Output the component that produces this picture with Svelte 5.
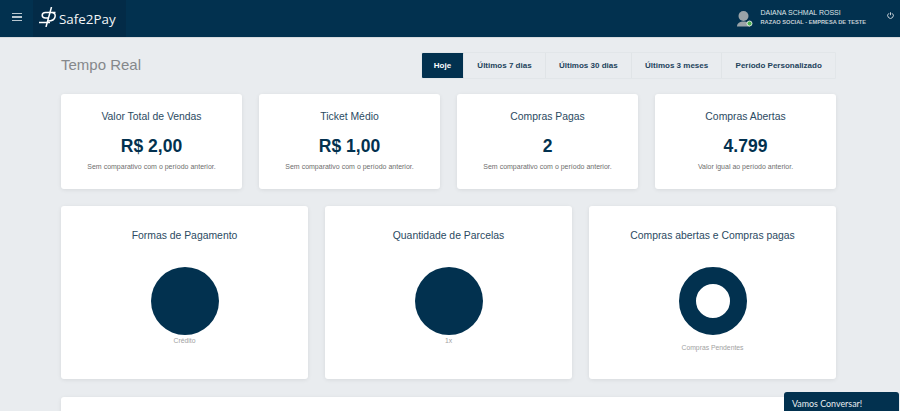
<script>
    const periods = ["Hoje", "Últimos 7 dias", "Últimos 30 dias", "Últimos 3 meses", "Período Personalizado"];

    const stats = [
        {title: "Valor Total de Vendas", value: "R$ 2,00", note: "Sem comparativo com o período anterior."},
        {title: "Ticket Médio", value: "R$ 1,00", note: "Sem comparativo com o período anterior."},
        {title: "Compras Pagas", value: "2", note: "Sem comparativo com o período anterior."},
        {title: "Compras Abertas", value: "4.799", note: "Valor igual ao período anterior."}
    ];

    const charts = [
        {title: "Formas de Pagamento", label: "Crédito", hole: false},
        {title: "Quantidade de Parcelas", label: "1x", hole: false},
        {title: "Compras abertas e Compras pagas", label: "Compras Pendentes", hole: true}
    ];
</script>

<header class="topbar">
    <button class="menu" aria-label="Menu">
        <span></span><span></span><span></span>
    </button>
    <div class="logo">
        <svg width="17" height="20" viewBox="0 0 17 20" fill="none" stroke="#fff" stroke-width="1.500">
            <path d="M0 15.500H11" />
            <path d="M16.500 5.500H6.500C4 5.500 3.200 7.200 3.200 8.300C3.200 10 4.500 11 6.500 11H10" />
            <path d="M13.500 5.500C15.800 6 16.500 8 16 10C15.500 12.500 13 14 9 14" />
            <path d="M12.500 0L7 20" />
        </svg>
        <span>Safe2Pay</span>
    </div>
    <div class="user">
        <svg class="avatar" width="16" height="16" viewBox="0 0 16 16">
            <circle cx="6.500" cy="5" r="5" fill="#9aa3a8" />
            <path d="M0 15.500C0 12 3 10.500 6.500 10.500C10 10.500 13 12 13 15.500Z" fill="#9aa3a8" />
            <circle cx="12.500" cy="12.500" r="2.500" fill="#4caf50" stroke="#fff" stroke-width=".8" />
        </svg>
        <div class="user-text">
            <div class="user-name">DAIANA SCHMAL ROSSI</div>
            <div class="user-company">RAZAO SOCIAL - EMPRESA DE TESTE</div>
        </div>
    </div>
    <svg class="power" width="7" height="7" viewBox="0 0 12 12" fill="none" stroke="#e4e8eb" stroke-width="1.500">
        <path d="M6 0.500V5.500" />
        <path d="M3.300 2.200A4.800 4.800 0 1 0 8.700 2.200" />
    </svg>
</header>

<main class="content">
    <div class="heading">
        <h1>Tempo Real</h1>
        <div class="periods">
            {#each periods as period, i}
                <button class="period" class:active={i === 0}>{period}</button>
            {/each}
        </div>
    </div>

    <section class="stats">
        {#each stats as stat}
            <div class="card stat">
                <h2>{stat.title}</h2>
                <div class="value">{stat.value}</div>
                <p>{stat.note}</p>
            </div>
        {/each}
    </section>

    <section class="charts">
        {#each charts as chart}
            <div class="card chart">
                <h2>{chart.title}</h2>
                <div class="pie" class:donut={chart.hole}></div>
                <div class="pie-label" class:low={chart.hole}>{chart.label}</div>
            </div>
        {/each}
    </section>

    <div class="card bottom"></div>
</main>

<div class="chat">Vamos Conversar!</div>

<style>
    :global(html), :global(body) {
        height: 100%;
        overflow: hidden;
    }
    :global(body) {
        background-color: #e9ecef;
        font-family: "Liberation Sans", Arial, sans-serif;
    }

    .topbar {
        height: 37px;
        background-color: #02314f;
        border-bottom: 1px solid #d6dade;
        display: flex;
        align-items: center;
        position: relative;
    }
    .menu {
        width: 33px;
        height: 37px;
        padding: 0 0 3px 12px;
        border: 0;
        background: none;
        display: flex;
        flex-direction: column;
        justify-content: center;
        gap: 2px;
    }
    .menu span {
        display: block;
        width: 10px;
        height: 1.500px;
        background-color: #b9c7d0;
    }
    .logo {
        width: 93px;
        height: 37px;
        background-color: #032b47;
        display: flex;
        align-items: center;
        color: #f4f6f7;
        font-family: "Open Sans", sans-serif;
        font-size: 13.400px;
        gap: 3px;
        padding-left: 6px;
        box-sizing: border-box;
    }
    .logo svg {
        margin-top: -3px;
    }
    .user {
        margin-left: auto;
        display: flex;
        align-items: center;
        gap: 7px;
        margin-right: 21px;
    }
    .avatar {
        margin-top: 1px;
    }
    .user-text {
        display: flex;
        flex-direction: column;
        gap: 3px;
        margin-top: -3px;
    }
    .user-name {
        font-size: 7px;
        color: #dfe4e8;
    }
    .user-company {
        font-size: 5.700px;
        font-weight: 700;
        color: #c5ced4;
    }
    .power {
        margin-right: 6px;
        margin-top: -6px;
    }

    .content {
        height: calc(100vh - 38px);
        overflow: hidden;
        box-sizing: border-box;
        padding: 0 64px 0 61px;
    }
    .heading {
        display: flex;
        justify-content: space-between;
        align-items: center;
        padding-top: 14px;
        height: 26px;
        margin-bottom: 16px;
    }
    h1 {
        margin: -2px 0 0;
        font-size: 15px;
        font-weight: 400;
        color: #85888b;
    }
    .periods {
        display: flex;
        border: 1px solid #e2e6e9;
        border-radius: 1px;
    }
    .period {
        height: 25px;
        padding: 0 13.200px;
        border: 0;
        border-right: 1px solid #e0e4e7;
        background: none;
        font-family: inherit;
        font-size: 8px;
        font-weight: 700;
        color: #22435c;
    }
    .period:last-child {
        border-right: 0;
    }
    .period.active {
        background-color: #02314f;
        color: #fff;
        border-radius: 1px;
        padding: 0 12px;
    }

    .card {
        background-color: #fff;
        border-radius: 3px;
        box-shadow: 0 1px 4px rgba(0, 0, 0, .08);
    }
    .stats {
        display: grid;
        grid-template-columns: repeat(4, 1fr);
        gap: 17px;
    }
    .stat {
        height: 95px;
        text-align: center;
        padding-top: 17px;
        box-sizing: border-box;
    }
    h2 {
        margin: 0;
        font-size: 10.400px;
        font-weight: 400;
        color: #2b4a62;
    }
    .value {
        margin-top: 14px;
        font-size: 17.500px;
        font-weight: 700;
        color: #02314f;
    }
    .stat p {
        margin: 6px 0 0;
        font-size: 7px;
        color: #6e6e6e;
    }

    .charts {
        display: grid;
        grid-template-columns: repeat(3, 1fr);
        gap: 17px;
        margin-top: 17px;
    }
    .chart {
        height: 173px;
        padding-top: 24px;
        box-sizing: border-box;
        display: flex;
        flex-direction: column;
        align-items: center;
    }
    .chart h2 {
        line-height: 12px;
    }
    .pie {
        width: 68px;
        height: 68px;
        margin-top: 25px;
        border-radius: 50%;
        background-color: #02314f;
    }
    .pie.donut {
        box-sizing: border-box;
        background: none;
        border: 17px solid #02314f;
    }
    .pie-label {
        margin-top: 2px;
        font-size: 6.800px;
        color: #a2a2a2;
    }
    .pie-label.low {
        margin-top: 9px;
    }

    .bottom {
        height: 60px;
        margin-top: 18px;
    }

    .chat {
        position: fixed;
        right: 1px;
        bottom: 0;
        width: 115px;
        height: 19px;
        box-sizing: border-box;
        padding: 6px 0 0 8px;
        background-color: #02314f;
        border-radius: 3px 3px 0 0;
        color: #e8edf0;
        font-family: Lato, sans-serif;
        font-size: 8.900px;
    }
</style>
